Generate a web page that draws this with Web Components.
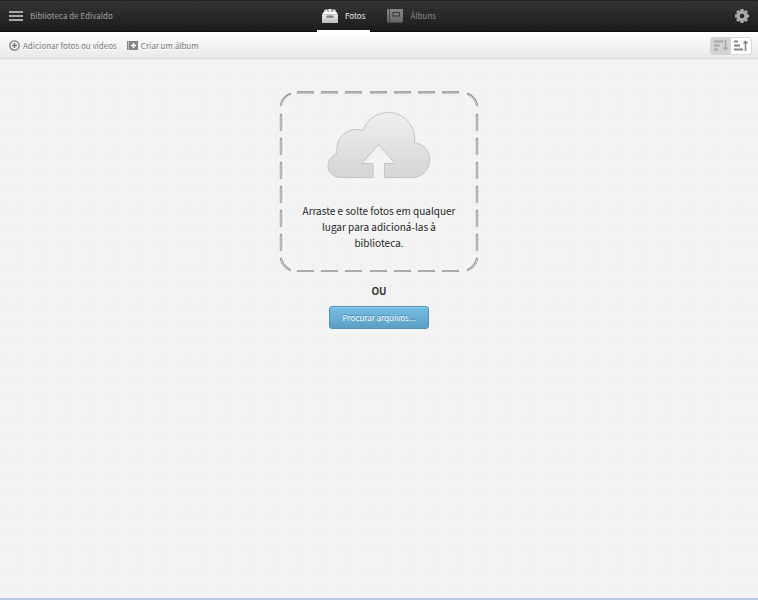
<!DOCTYPE html>
<html lang="pt-BR">
<head>
<meta charset="utf-8">
<meta name="viewport" content="width=device-width, initial-scale=1">
<title>Biblioteca de Edivaldo</title>
<style>
html, body { margin: 0; min-height: 100%; }
body { font-family: "Noto Sans CJK SC", "Noto Sans", sans-serif; font-size: 8px; line-height: 16px; color: #333; }
</style>
</head>
<body>
<photo-library></photo-library>
<script>
const define = (name, markup) => {
  const template = document.createElement('template');
  template.innerHTML = markup;
  customElements.define(name, class extends HTMLElement {
    constructor() {
      super();
      this.attachShadow({ mode: 'open' }).append(template.content.cloneNode(true));
    }
  });
};

define('nav-tab', `
<style>
:host { display: block; }
a { box-sizing: border-box; height: 32px; padding: 2px 5px 0; display: flex; align-items: center; gap: 7px;
  color: #8c8c8c; text-decoration: none; border-bottom: 2px solid transparent; }
:host([active]) a { color: #f0f0f0; border-color: #fff; }
</style>
<a href="#"><slot name="icon"></slot><slot></slot></a>`);

define('tool-button', `
<style>
:host { display: block; }
button { font: inherit; color: #777; background: none; border: 0; margin: 0; padding: 0;
  display: flex; align-items: center; gap: 3px; text-shadow: 0 1px #fff; cursor: pointer; white-space: nowrap; }
</style>
<button type="button"><slot name="icon"></slot><slot></slot></button>`);

define('app-header', `
<style>
:host { display: grid; grid-template-columns: 1fr auto 1fr; align-items: center; height: 32px; color: #a4a4a4;
  background: repeating-linear-gradient(135deg, #0000 0 2px, #0001 2px 3px), linear-gradient(#363636, #1c1c1c);
  box-shadow: inset 0 1px #222, inset 0 -1px #111; }
svg { display: block; flex: none; }
.left { display: flex; align-items: center; gap: 7px; padding-left: 9px; }
nav { display: flex; gap: 12px; }
.right { justify-self: end; padding-right: 9px; }
button { background: none; border: 0; padding: 0; display: block; cursor: pointer; }
</style>
<div class="left">
  <button type="button" aria-label="Menu"><svg width="14" height="12" viewBox="0 0 14 12"><path d="M0 2h14M0 6h14M0 10h14" stroke="#aaa" stroke-width="2"/></svg></button>
  <span>Biblioteca de Edivaldo</span>
</div>
<nav>
  <nav-tab active>
    <svg slot="icon" width="16" height="16" viewBox="0 0 16 16">
      <defs><linearGradient id="b" x2="0" y2="1"><stop stop-color="#eee"/><stop offset="1" stop-color="#bdbdbd"/></linearGradient></defs>
      <path d="M2.300 4.500V2l3.200-.8.500 3.300zM6.300 4.500V1h3.400v3.500zM10.200 4.500l.5-3.300 3 .8v2.500z" fill="#e8e8e8"/>
      <path d="M1.500 4h13L16 6.500H0z" fill="#fff"/><path d="M0 6h16v8.500q0 .5-.5.5H.5q-.5 0-.5-.5z" fill="url(#b)"/><path d="M0 6.500h16" stroke="#999" stroke-width=".5"/>
      <rect x="4.500" y="7.500" width="7" height="2.500" rx=".8" fill="#777"/><path d="M5.500 9.200h5" stroke="#bbb" stroke-width=".6"/>
    </svg>Fotos</nav-tab>
  <nav-tab>
    <svg slot="icon" width="16" height="14" viewBox="0 0 16 14">
      <defs><linearGradient id="a" x2="0" y2="1"><stop stop-color="#868686"/><stop offset="1" stop-color="#686868"/></linearGradient></defs>
      <rect width="16" height="13" rx=".7" fill="url(#a)"/><path d="M.5 13.500h15" stroke="#484848"/>
      <path d="M2.500 0v13" stroke="#3c3c3c" stroke-width=".8"/><rect x="6" y="3.500" width="6.500" height="3.500" fill="#7d7d7d" stroke="#3a3a3a"/>
    </svg>Álbuns</nav-tab>
</nav>
<div class="right">
  <button type="button" aria-label="Configurações"><svg width="14" height="14" viewBox="-7 -7 14 14">
    <g fill="#aaa"><path id="t" d="M-1.400-7h2.800l.6 3h-4zM-1.400 7h2.800l.6-3h-4z"/><use href="#t" transform="rotate(45)"/><use href="#t" transform="rotate(90)"/><use href="#t" transform="rotate(135)"/></g>
    <circle r="3.800" fill="none" stroke="#aaa" stroke-width="3"/></svg></button>
</div>`);

define('sort-switch', `
<style>
:host { display: flex; border-radius: 3px; border: 1px solid #d6d6d6; overflow: hidden; }
button { width: 20px; height: 16px; padding: 0; border: 0; background: #fdfdfd; color: #858585; display: grid; place-items: center; cursor: pointer; }
button:first-of-type { background: #d3d3d3; color: #a6a6a6; }
svg { display: block; }
</style>
<button type="button" aria-label="Ordem decrescente"><svg width="14" height="11" viewBox="0 0 14 11" fill="none" stroke="currentColor" stroke-width="2"><path d="M0 1.500h9M0 5.500h6M0 9.500h4"/><path d="M11.500 0v10M9.500 7.500l2 2.200 2-2.200" stroke-width="1.500"/></svg></button>
<button type="button" aria-label="Ordem crescente" aria-pressed="true"><svg width="14" height="11" viewBox="0 0 14 11" fill="none" stroke="currentColor" stroke-width="2"><path d="M0 1.500h4M0 5.500h6M0 9.500h9"/><path d="M11.500 11V1M9.500 3.500l2-2.200 2 2.200" stroke-width="1.500"/></svg></button>`);

define('app-toolbar', `
<style>
:host { box-sizing: border-box; height: 27px; padding: 1px 6px 0 9px; display: flex; align-items: center; justify-content: space-between;
  background: linear-gradient(#fff, #e9e9e9); border-bottom: 1px solid #d9d9d9; }
.tools { display: flex; gap: 10px; }
svg { display: block; flex: none; }
</style>
<div class="tools">
  <tool-button><svg slot="icon" width="11" height="11" viewBox="0 0 11 11" fill="none" stroke="#777"><circle cx="5.500" cy="5.500" r="4.700" stroke-width="1.300"/><path d="M5.500 3v5M3 5.500h5" stroke-width="1.500"/></svg>Adicionar fotos ou vídeos</tool-button>
  <tool-button><svg slot="icon" width="11" height="9" viewBox="0 0 11 9"><path d="M0 0h1.500v9H0zM2 0h9v9H2z" fill="#858585"/><path d="M6.500 2v5M4 4.500h5" stroke="#fff" stroke-width="1.500"/></svg>Criar um álbum</tool-button>
</div>
<sort-switch></sort-switch>`);

define('drop-zone', `
<style>
:host { position: relative; box-sizing: border-box; width: 200px; min-height: 181px; padding: 20px 20px 0;
  display: flex; flex-direction: column; align-items: center; gap: 24px; }
.frame { position: absolute; inset: 0; }
svg { display: block; flex: none; }
p { margin: 0; font-size: 10px; line-height: 16px; text-align: center; color: #222; text-shadow: 0 1px #fff; }
</style>
<svg class="frame" width="200" height="181" viewBox="0 0 200 181" fill="none" stroke-linecap="round">
  <defs>
    <path id="h" d="M19 1.500h15M43 1.500h15M67 1.500h15M92 1.500h15M116 1.500h15M140 1.500h15M164 1.500h15"/>
    <path id="v" d="M2 24v15M2 48v15M2 72v15M2 96v15M2 120v15M2 144v15"/>
    <path id="c" d="M2 14Q4 6 11 3"/>
    <g id="all"><use href="#h"/><use href="#h" y="179"/><use href="#v"/><use href="#v" x="196"/>
      <use href="#c"/><use href="#c" transform="translate(200 0) scale(-1 1)"/><use href="#c" transform="translate(0 182) scale(1 -1)"/><use href="#c" transform="translate(200 182) scale(-1 -1)"/></g>
  </defs>
  <use href="#all" stroke="#8f8f8f" stroke-width="2.400"/><use href="#all" y=".7" stroke="#cfcfcf" stroke-width="1.200"/>
</svg>
<svg width="104" height="68" viewBox="0 0 104 68">
  <defs><linearGradient id="g" x2="0" y2="1"><stop stop-color="#efefef"/><stop offset="1" stop-color="#d5d5d5"/></linearGradient></defs>
  <path d="M14 66.500C6 66.500 1 61 1 54.500c0-5 3.500-10 9-11.200C8 28 18 18.500 29.500 18.500q3.500 0 6.500 1C40 8 50 1.500 61.500 1.500c15 0 28 13 26 30.200 9 1 15.200 8.300 15.200 16.800 0 10-7.500 18-17.200 18H57.500V52.500H68L51.500 33.500 35 52.500h11v14z" fill="url(#g)" stroke="#c3c3c3"/>
</svg>
<p><slot></slot></p>`);

define('photo-library', `
<style>
:host { box-sizing: border-box; min-height: 100vh; display: flex; flex-direction: column; border-bottom: 2px solid #b7cbe7;
  background: repeating-linear-gradient(90deg, #00000002 0 1px, #0000 1px 7px, #ffffff18 7px 9px, #0000 9px 23px),
    repeating-linear-gradient(#00000002 0 1px, #0000 1px 8px, #ffffff18 8px 10px, #0000 10px 19px), #f3f3f3; }
main { flex: 1; display: flex; flex-direction: column; align-items: center; padding-top: 32px; }
strong { font-size: 10px; line-height: 16px; margin: 11px 0 7px; }
.browse { font: inherit; color: #fff; height: 23px; padding: 0 12px; border: 1px solid #5692b3; border-radius: 3px; cursor: pointer;
  background: linear-gradient(#77bfe5, #5b9fc4); box-shadow: inset 0 1px #8bcaeb; text-shadow: 0 -1px #4683a5; }
</style>
<app-header></app-header>
<app-toolbar></app-toolbar>
<main>
  <drop-zone>Arraste e solte fotos em qualquer lugar para adicioná-las à biblioteca.</drop-zone>
  <strong>OU</strong>
  <button type="button" class="browse">Procurar arquivos...</button>
</main>`);
</script>
</body>
</html>
